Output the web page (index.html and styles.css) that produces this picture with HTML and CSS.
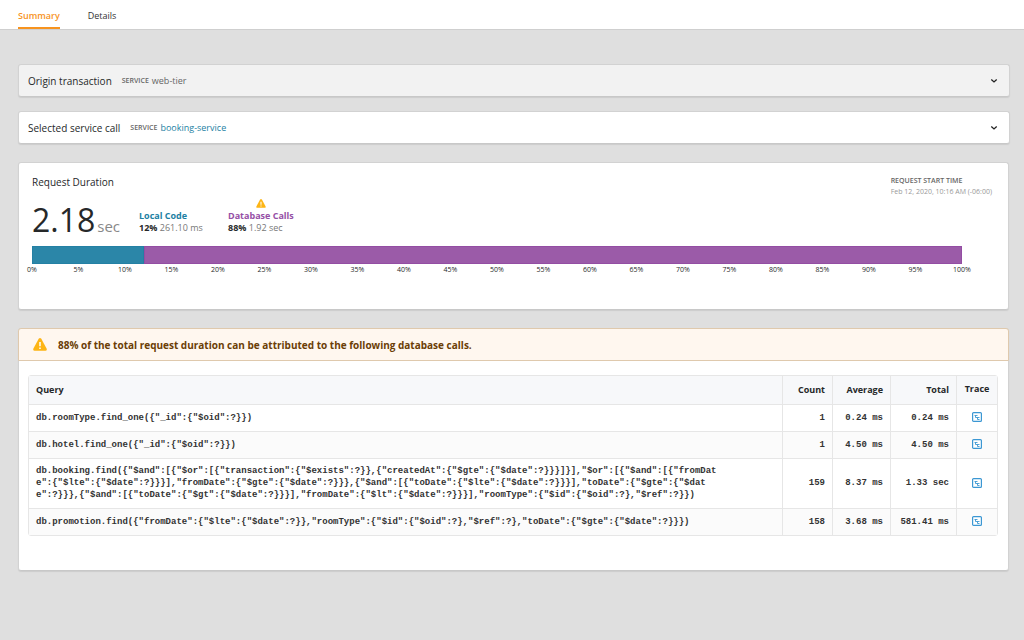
FILE: index.html
```html
<!DOCTYPE html>
<html lang="en">
<head>
<meta charset="utf-8">
<meta name="viewport" content="width=device-width, initial-scale=1">
<title>Transaction summary</title>
<link rel="stylesheet" href="styles.css">
</head>
<body>
<svg class="sprite" aria-hidden="true">
  <symbol id="warning" viewBox="0 0 14 13">
    <path d="M5.700.8Q7-.7 8.300.8L13.700 10.800Q14 12.700 12.500 12.800H1.500Q0 12.700.3 10.800Z" fill="#fdb515"/>
    <path d="M7 4v4.200M7 9.500v1.500" stroke="#fff" stroke-width="1.500"/>
  </symbol>
  <symbol id="chevron" viewBox="0 0 8 6">
    <path d="M1.300 1.400 4 3.900 6.700 1.400" fill="none" stroke="#222" stroke-width="1.300"/>
  </symbol>
  <symbol id="trace" viewBox="0 0 10 10">
    <rect x=".6" y=".6" width="8.800" height="8.800" rx="1" fill="#fff" stroke="#3b97d3" stroke-width="1.200"/>
    <path d="M2.500 3.500h3M3.500 3.500v2h4M5.500 5.500v2h2" fill="none" stroke="#3b97d3" stroke-width=".9"/>
  </symbol>
</svg>
<nav class="tabs">
  <a class="tab tab-active" href="#summary" aria-current="page">Summary</a>
  <a class="tab" href="#details">Details</a>
</nav>
<main class="content" id="summary">
  <section class="card panel panel-muted">
    <h2 class="title">Origin transaction</h2>
    <span class="service-label">SERVICE</span>
    <span class="service-name">web-tier</span>
    <button class="toggle" type="button" aria-label="Expand origin transaction"><svg class="chevron"><use href="#chevron"/></svg></button>
  </section>
  <section class="card panel">
    <h2 class="title">Selected service call</h2>
    <span class="service-label">SERVICE</span>
    <a class="service-name service-link" href="#booking-service">booking-service</a>
    <button class="toggle" type="button" aria-label="Expand selected service call"><svg class="chevron"><use href="#chevron"/></svg></button>
  </section>

  <section class="card duration">
    <header class="duration-head">
      <h2 class="title">Request Duration</h2>
      <div class="start">
        <div class="start-label">REQUEST START TIME</div>
        <div class="start-value">Feb 12, 2020, 10:16 AM (-06:00)</div>
      </div>
    </header>
    <div class="stats">
      <div class="total"><span class="total-number">2.18</span><span class="total-unit">sec</span></div>
      <div class="stat stat-local">
        <div class="stat-name local">Local Code</div>
        <div class="stat-value"><b>12%</b> 261.10 ms</div>
      </div>
      <div class="stat">
        <svg class="stat-warning"><use href="#warning"/></svg>
        <div class="stat-name database">Database Calls</div>
        <div class="stat-value"><b>88%</b> 1.92 sec</div>
      </div>
    </div>
    <div class="chart">
      <div class="bar"><div class="bar-local" style="width:12%"></div><div class="bar-database" style="width:88%"></div></div>
      <div class="ticks">
        <span>0%</span><span>5%</span><span>10%</span><span>15%</span><span>20%</span><span>25%</span><span>30%</span><span>35%</span><span>40%</span><span>45%</span><span>50%</span><span>55%</span><span>60%</span><span>65%</span><span>70%</span><span>75%</span><span>80%</span><span>85%</span><span>90%</span><span>95%</span><span>100%</span>
      </div>
    </div>
  </section>

  <section class="card database-card">
    <div class="alert"><svg class="alert-icon"><use href="#warning"/></svg><strong class="alert-text">88% of the total request duration can be attributed to the following database calls.</strong></div>
    <div class="table-wrap">
      <table class="queries">
        <colgroup><col><col class="col-count"><col class="col-average"><col class="col-total"><col class="col-trace"></colgroup>
        <thead><tr><th class="query">Query</th><th>Count</th><th>Average</th><th>Total</th><th class="trace">Trace</th></tr></thead>
        <tbody>
          <tr><td class="query">db.roomType.find_one({"_id":{"$oid":?}})</td><td>1</td><td>0.24 ms</td><td>0.24 ms</td><td class="trace"><button class="trace-button" type="button" aria-label="Open trace"><svg class="trace-icon"><use href="#trace"/></svg></button></td></tr>
          <tr><td class="query">db.hotel.find_one({"_id":{"$oid":?}})</td><td>1</td><td>4.50 ms</td><td>4.50 ms</td><td class="trace"><button class="trace-button" type="button" aria-label="Open trace"><svg class="trace-icon"><use href="#trace"/></svg></button></td></tr>
          <tr><td class="query">db.booking.find({"$and":[{"$or":[{"transaction":{"$exists":?}},{"createdAt":{"$gte":{"$date":?}}}]}],"$or":[{"$and":[{"fromDat<br>e":{"$lte":{"$date":?}}}],"fromDate":{"$gte":{"$date":?}}},{"$and":[{"toDate":{"$lte":{"$date":?}}}],"toDate":{"$gte":{"$dat<br>e":?}}},{"$and":[{"toDate":{"$gt":{"$date":?}}}],"fromDate":{"$lt":{"$date":?}}}],"roomType":{"$id":{"$oid":?},"$ref":?}})</td><td>159</td><td>8.37 ms</td><td>1.33 sec</td><td class="trace"><button class="trace-button" type="button" aria-label="Open trace"><svg class="trace-icon"><use href="#trace"/></svg></button></td></tr>
          <tr><td class="query">db.promotion.find({"fromDate":{"$lte":{"$date":?}},"roomType":{"$id":{"$oid":?},"$ref":?},"toDate":{"$gte":{"$date":?}}})</td><td>158</td><td>3.68 ms</td><td>581.41 ms</td><td class="trace"><button class="trace-button" type="button" aria-label="Open trace"><svg class="trace-icon"><use href="#trace"/></svg></button></td></tr>
        </tbody>
      </table>
    </div>
  </section>
</main>
</body>
</html>
```
FILE: styles.css
```css
* { box-sizing: border-box; }
body {
  margin: 0;
  min-height: 100vh;
  background: #dfdfdf;
  color: #262829;
  font: 10px/12px "Open Sans", sans-serif;
}
svg { display: block; }
.sprite { position: absolute; width: 0; height: 0; }

.tabs {
  display: flex;
  gap: 28px;
  padding: 0 18px;
  background: #fff;
  border-bottom: 1px solid #cfcfcf;
}
.tab {
  padding: 10px 0 5px;
  border-bottom: 2px solid transparent;
  color: #333;
  font-size: 9px;
  font-weight: 500;
  text-decoration: none;
}
.tab-active { border-color: #f7931e; color: #f7931e; font-weight: 600; }

.content { padding: 34px 14px 20px 18px; }
.card {
  background: #fff;
  border: 1px solid #d2d2d2;
  border-bottom-color: #c8c8c8;
  border-radius: 3px;
  box-shadow: 0 1px 1px #cdcdcd;
}
.title { margin: 0; font-size: 10px; line-height: 14px; font-weight: 400; }

.panel {
  display: flex;
  align-items: center;
  height: 33px;
  margin-bottom: 14px;
  padding: 0 11px 0 9px;
}
.panel-muted { background: #f2f2f2; }
.service-label { margin-left: 10px; color: #666; font-size: 7px; font-weight: 600; }
.service-name { margin-left: 3px; color: #666; font-size: 9px; }
.service-link { color: #1d7fa3; text-decoration: none; }
.toggle { margin-left: auto; padding: 0; border: 0; background: none; }
.chevron { width: 8px; height: 6px; }

.duration { margin: 18px 1px; padding: 12px 16px 33px 13px; }
.duration-head { display: flex; justify-content: space-between; }
.start { font-size: 7px; line-height: 11px; color: #999; }
.start-label { color: #666; font-weight: 600; }
.duration { margin-left: 0; }
.stats { display: flex; align-items: flex-end; height: 38px; margin-top: 1px; }
.total { display: flex; align-items: baseline; gap: 2px; width: 107px; line-height: 20px; }
.total-number { font-size: 32px; }
.total-unit { font-size: 15px; color: #888; }
.stat { color: #777; font-size: 9px; padding-bottom: 2px; }
.stat-local { width: 89px; }
.stat-name { font-size: 9px; font-weight: 700; }
.stat-value b { color: #262829; }
.stat-warning { width: 10px; height: 9px; margin: 0 auto 2px; }
.local { color: #1d7fa3; }
.database { color: #9650a6; }
.chart { margin: 10px 30px 0 0; }
.bar { display: flex; height: 18px; }
.bar-local { background: #2b86a8; border: 1px solid #2480a4; }
.bar-database { background: #9b5ba8; border: 1px solid #934da3; }
.ticks { display: flex; justify-content: space-between; font-size: 7px; }
.ticks span { display: flex; justify-content: center; width: 0; }

.database-card { margin-right: 1px; }
.alert {
  display: flex;
  align-items: center;
  gap: 11px;
  height: 33px;
  margin: -1px -1px 0;
  padding: 0 14px;
  background: #fff7ef;
  border: 1px solid #dfc9ad;
  border-radius: 3px 3px 0 0;
}
.alert-icon { width: 14px; height: 13px; }
.alert-text { color: #6b3e06; font-size: 10px; font-weight: 700; }

.table-wrap { padding: 14px 10px 34px 9px; }
.queries {
  width: 100%;
  table-layout: fixed;
  border: 1px solid #e6e6e6;
  border-radius: 3px;
  border-collapse: separate;
  border-spacing: 0;
}
.col-count { width: 50px; }
.col-average { width: 58px; }
.col-total { width: 66px; }
.col-trace { width: 41px; }
.queries th, .queries td {
  padding: 6px 7px 7px;
  border-bottom: 1px solid #e6e6e6;
  border-left: 1px solid #e6e6e6;
  text-align: right;
}
.queries th:first-child, .queries td:first-child { border-left: 0; }
.queries th { height: 29px; background: #f7f8fa; font-size: 9px; font-weight: 700; }
.queries td { height: 27px; font: 700 9px/12px "Liberation Mono", monospace; color: #333; }
.queries .query { text-align: left; white-space: nowrap; }
.queries .trace { padding: 0 0 2px; text-align: center; }
.queries tbody tr:nth-child(even) { background: #fbfbfb; }
.queries tbody tr:last-child td { height: 26px; border-bottom: 0; }
.trace-button { display: block; margin: 0 auto; padding: 0; border: 0; background: none; }
.trace-icon { width: 10px; height: 10px; }
```
